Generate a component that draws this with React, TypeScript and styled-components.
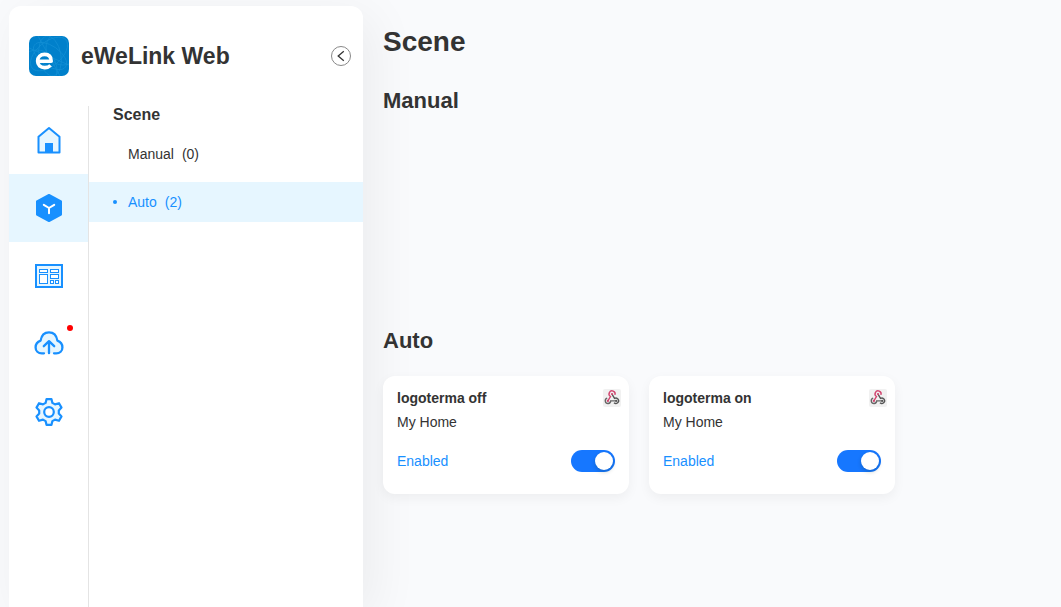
import React, { useId, useState } from "react";
import styled, { createGlobalStyle } from "styled-components";

const GlobalStyle = createGlobalStyle`
  *, *::before, *::after { box-sizing: border-box; }
  body {
    margin: 0;
    background: #f9fafc;
    color: #333;
    font-family: "Liberation Sans", Arial, sans-serif;
    font-size: 14px;
    line-height: 24px;
  }
  h1, h2, h3, p, ul { margin: 0; padding: 0; }
  ul { list-style: none; }
  button { border: 0; padding: 0; background: none; font: inherit; color: inherit; cursor: pointer; }
  a { color: inherit; text-decoration: none; }
`;

const Page = styled.div`
  display: flex;
  min-height: 100vh;
  padding: 6px 0 0 9px;
  overflow: hidden;
`;

const Sidebar = styled.aside`
  display: flex;
  flex-direction: column;
  flex: 0 0 354px;
  background: #fff;
  border-radius: 12px 12px 0 0;
  box-shadow: 10px 10px 50px rgba(0, 0, 0, 0.06);
`;

const Brand = styled.header`
  display: flex;
  align-items: center;
  gap: 12px;
  padding: 30px 12px 30px 20px;
`;

const BrandName = styled.p`
  flex: 1;
  font-size: 23px;
  font-weight: 700;
  line-height: 40px;
`;

const CollapseButton = styled.button`
  display: flex;
  width: 20px;
  height: 20px;
`;

const Panels = styled.div`
  display: flex;
  flex: 1;
`;

const Rail = styled.nav`
  width: 80px;
  border-right: 1px solid #e4e4e4;
`;

const RailLink = styled.a<{ $active?: boolean }>`
  position: relative;
  display: flex;
  align-items: center;
  justify-content: center;
  height: 68px;
  background: ${(p) => (p.$active ? "#e6f6ff" : "transparent")};
`;

const Badge = styled.span`
  position: absolute;
  top: 15px;
  right: 15px;
  width: 6px;
  height: 6px;
  border-radius: 50%;
  background: #f00;
`;

const SceneNav = styled.nav`
  flex: 1;
`;

const NavTitle = styled.h3`
  padding-left: 24px;
  margin-bottom: 10px;
  font-size: 16px;
  line-height: 18px;
`;

const NavList = styled.ul`
  display: grid;
  gap: 8px;
`;

const NavLink = styled.a<{ $active?: boolean }>`
  display: flex;
  align-items: center;
  gap: 8px;
  height: 40px;
  padding-left: 24px;
  color: ${(p) => (p.$active ? "#1890ff" : "#333")};
  background: ${(p) => (p.$active ? "#e6f6ff" : "transparent")};

  &::before {
    content: "";
    width: 4px;
    height: 4px;
    margin-right: 3px;
    border-radius: 50%;
    background: ${(p) => (p.$active ? "#1890ff" : "transparent")};
  }
`;

const Main = styled.main`
  flex: 1;
  min-width: 0;
  padding: 16px 20px;
`;

const PageTitle = styled.h1`
  font-size: 28px;
  line-height: 40px;
`;

const Section = styled.section`
  min-height: 220px;
  margin-top: 20px;
`;

const SectionTitle = styled.h2`
  margin-bottom: 16px;
  font-size: 22px;
  line-height: 38px;
`;

const Cards = styled.div`
  display: flex;
  flex-wrap: wrap;
  gap: 20px;
`;

const Card = styled.article`
  width: 246px;
  padding: 10px 14px 22px;
  background: #fff;
  border-radius: 12px;
  box-shadow: 0 4px 12px rgba(0, 0, 0, 0.05);
`;

const CardHead = styled.div`
  display: flex;
  align-items: center;
  justify-content: space-between;
  margin-right: -6px;
`;

const CardTitle = styled.h3`
  font-size: 14px;
  line-height: 24px;
`;

const SwitchRow = styled.div`
  display: flex;
  align-items: center;
  justify-content: space-between;
  height: 22px;
  margin-top: 16px;
`;

const SwitchLabel = styled.label`
  color: #1890ff;
`;

const Switch = styled.input`
  appearance: none;
  display: flex;
  width: 44px;
  height: 22px;
  margin: 0;
  padding: 2px;
  border-radius: 11px;
  background: #bfbfbf;
  cursor: pointer;

  &::before {
    content: "";
    width: 18px;
    height: 18px;
    border-radius: 50%;
    background: #fff;
    box-shadow: 0 2px 4px rgba(0, 35, 11, 0.2);
  }

  &:checked { background: #1677ff; justify-content: flex-end; }
`;

const Logo = () => (
  <svg width="40" height="40" viewBox="0 0 40 40" aria-hidden="true">
    <defs>
      <clipPath id="logo-shape"><rect width="40" height="40" rx="7" /></clipPath>
    </defs>
    <g clipPath="url(#logo-shape)" fill="none">
      <rect width="40" height="40" fill="#0080cb" />
      <g stroke="#1490d5" strokeWidth="0.7">
        <ellipse cx="21" cy="20" rx="19" ry="10" transform="rotate(35 21 20)" />
        <ellipse cx="21" cy="20" rx="20" ry="11" transform="rotate(80 21 20)" />
        <ellipse cx="20" cy="18" rx="22" ry="12" transform="rotate(-40 20 18)" />
        <circle cx="34" cy="12" r="17" />
        <circle cx="8" cy="34" r="20" />
        <path d="M0 12L40 29M9 0L31 40" />
      </g>
      <path d="M9 25.2H22.2C22.2 20.6 19.7 18.4 15.6 18.4C11.4 18.4 8.6 21 8.6 25.1C8.6 29.2 11.5 31.6 15.8 31.6C18.3 31.6 20.3 30.8 21.6 29.4" stroke="#fff" strokeWidth="3.6" strokeLinejoin="round" />
    </g>
  </svg>
);

const CollapseIcon = () => (
  <svg width="20" height="20" viewBox="0 0 20 20" fill="none" aria-hidden="true">
    <circle cx="10" cy="10" r="9.5" stroke="#888" />
    <path d="M12.8 5.3L7.2 10L12.8 14.7" stroke="#333" strokeWidth="1.3" />
  </svg>
);

const HomeIcon = () => (
  <svg width="28" height="28" viewBox="0 0 28 28" fill="none" aria-hidden="true">
    <path d="M3.5 10.8L14 2L24.5 10.8V26.5H3.5Z" fill="#e6f6ff" stroke="#1890ff" strokeWidth="2" strokeLinejoin="round" />
    <path d="M10 17H18V26H10Z" fill="#1890ff" />
  </svg>
);

const SceneIcon = () => (
  <svg width="28" height="28" viewBox="0 0 28 28" fill="none" aria-hidden="true">
    <path d="M14 1L26 7.5V20.5L14 27L2 20.5V7.5Z" fill="#1890ff" stroke="#1890ff" strokeWidth="2" strokeLinejoin="round" />
    <path d="M8.8 10.8L14 14L19.2 10.8M14 14V19.2" stroke="#fff" strokeWidth="2" strokeLinecap="round" strokeLinejoin="round" />
  </svg>
);

const DashboardIcon = () => (
  <svg width="28" height="28" viewBox="0 0 28 28" fill="none" stroke="#1890ff" aria-hidden="true">
    <rect x="1" y="3" width="26" height="22" fill="#e6f6ff" strokeWidth="2" />
    <g fill="#fff">
      <rect x="4.5" y="7.5" width="8" height="3" />
      <rect x="4.5" y="12.5" width="8" height="9" />
      <rect x="15.5" y="7.5" width="8" height="3" />
      <rect x="15.5" y="12.5" width="8" height="4" />
      <rect x="15.5" y="18.5" width="3" height="3" />
      <rect x="20.5" y="18.5" width="3" height="3" />
    </g>
  </svg>
);

const CloudIcon = () => (
  <svg width="30" height="28" viewBox="0 0 30 28" fill="none" stroke="#1890ff" strokeWidth="2.3" strokeLinecap="round" strokeLinejoin="round" aria-hidden="true">
    <path d="M10 23.3H7.8C4.2 23.3 1.6 20.9 1.6 17.4C1.6 13.9 4.2 11.4 6.6 10.6C7.4 5.6 10.6 2.3 15 2.3C19.4 2.3 22.6 5.6 23.4 10.6C25.8 11.4 28.4 13.9 28.4 17.4C28.4 20.9 25.8 23.3 22.2 23.3H20" fill="#e6f6ff" />
    <path d="M15 23.2V11.8M9.8 16.2L15 11.2L20.2 16.2" />
  </svg>
);

const SettingsIcon = () => (
  <svg width="28" height="28" viewBox="0 0 28 28" fill="none" stroke="#1890ff" strokeWidth="2.2" strokeLinejoin="round" aria-hidden="true">
    <path d="M11.5 1.2H16.5L17.4 4.9L20 6.4L24 5.2L26.5 9.6L23.8 12.4V15.6L26.5 18.4L24 22.8L20 21.6L17.4 23.1L16.5 26.8H11.5L10.6 23.1L8 21.6L4 22.8L1.5 18.4L4.2 15.6V12.4L1.5 9.6L4 5.2L8 6.4L10.6 4.9Z" fill="#e6f6ff" />
    <circle cx="14" cy="14" r="4.8" fill="#fff" />
  </svg>
);

const WebhookIcon = () => (
  <svg width="18" height="18" viewBox="0 0 18 18" fill="none" strokeWidth="1.4" aria-label="Webhook" role="img">
    <rect width="18" height="18" rx="2" fill="#f1f1f1" />
    <path d="M11.9 5.9A3 3 0 1 0 7.5 7.5L5 11.7" stroke="#d2456f" />
    <path d="M4.2 9.2A2.7 2.7 0 1 0 7.7 11.9H12.8" stroke="#666" />
    <path d="M9 5.2L11.5 9.4A2.7 2.7 0 1 1 11 13.7" stroke="#555" />
    <circle cx="9" cy="5" r="1.1" fill="#d2456f" />
    <circle cx="4.9" cy="11.9" r="1.1" fill="#d2456f" />
    <circle cx="13.2" cy="11.9" r="1.1" fill="#555" />
  </svg>
);

function SceneCard({ name, home }: { name: string; home: string }) {
  const [enabled, setEnabled] = useState(true);
  const id = useId();
  return (
    <Card>
      <CardHead>
        <CardTitle>{name}</CardTitle>
        <WebhookIcon />
      </CardHead>
      <p>{home}</p>
      <SwitchRow>
        <SwitchLabel htmlFor={id}>{enabled ? "Enabled" : "Disabled"}</SwitchLabel>
        <Switch id={id} type="checkbox" checked={enabled} onChange={(e) => setEnabled(e.target.checked)} />
      </SwitchRow>
    </Card>
  );
}

export default function App() {
  return (
    <>
      <GlobalStyle />
      <Page>
        <Sidebar>
          <Brand>
            <Logo />
            <BrandName>eWeLink Web</BrandName>
            <CollapseButton type="button" aria-label="Collapse sidebar"><CollapseIcon /></CollapseButton>
          </Brand>
          <Panels>
            <Rail aria-label="Main">
              <RailLink href="#home" aria-label="Home"><HomeIcon /></RailLink>
              <RailLink href="#scene" aria-label="Scene" $active><SceneIcon /></RailLink>
              <RailLink href="#dashboard" aria-label="Dashboard"><DashboardIcon /></RailLink>
              <RailLink href="#upgrade" aria-label="Upgrade"><CloudIcon /><Badge /></RailLink>
              <RailLink href="#settings" aria-label="Settings"><SettingsIcon /></RailLink>
            </Rail>
            <SceneNav aria-label="Scenes">
              <NavTitle>Scene</NavTitle>
              <NavList>
                <li><NavLink href="#manual"><span>Manual</span><span>(0)</span></NavLink></li>
                <li><NavLink href="#auto" $active><span>Auto</span><span>(2)</span></NavLink></li>
              </NavList>
            </SceneNav>
          </Panels>
        </Sidebar>
        <Main>
          <PageTitle>Scene</PageTitle>
          <Section id="manual">
            <SectionTitle>Manual</SectionTitle>
          </Section>
          <Section id="auto">
            <SectionTitle>Auto</SectionTitle>
            <Cards>
              <SceneCard name="logoterma off" home="My Home" />
              <SceneCard name="logoterma on" home="My Home" />
            </Cards>
          </Section>
        </Main>
      </Page>
    </>
  );
}
